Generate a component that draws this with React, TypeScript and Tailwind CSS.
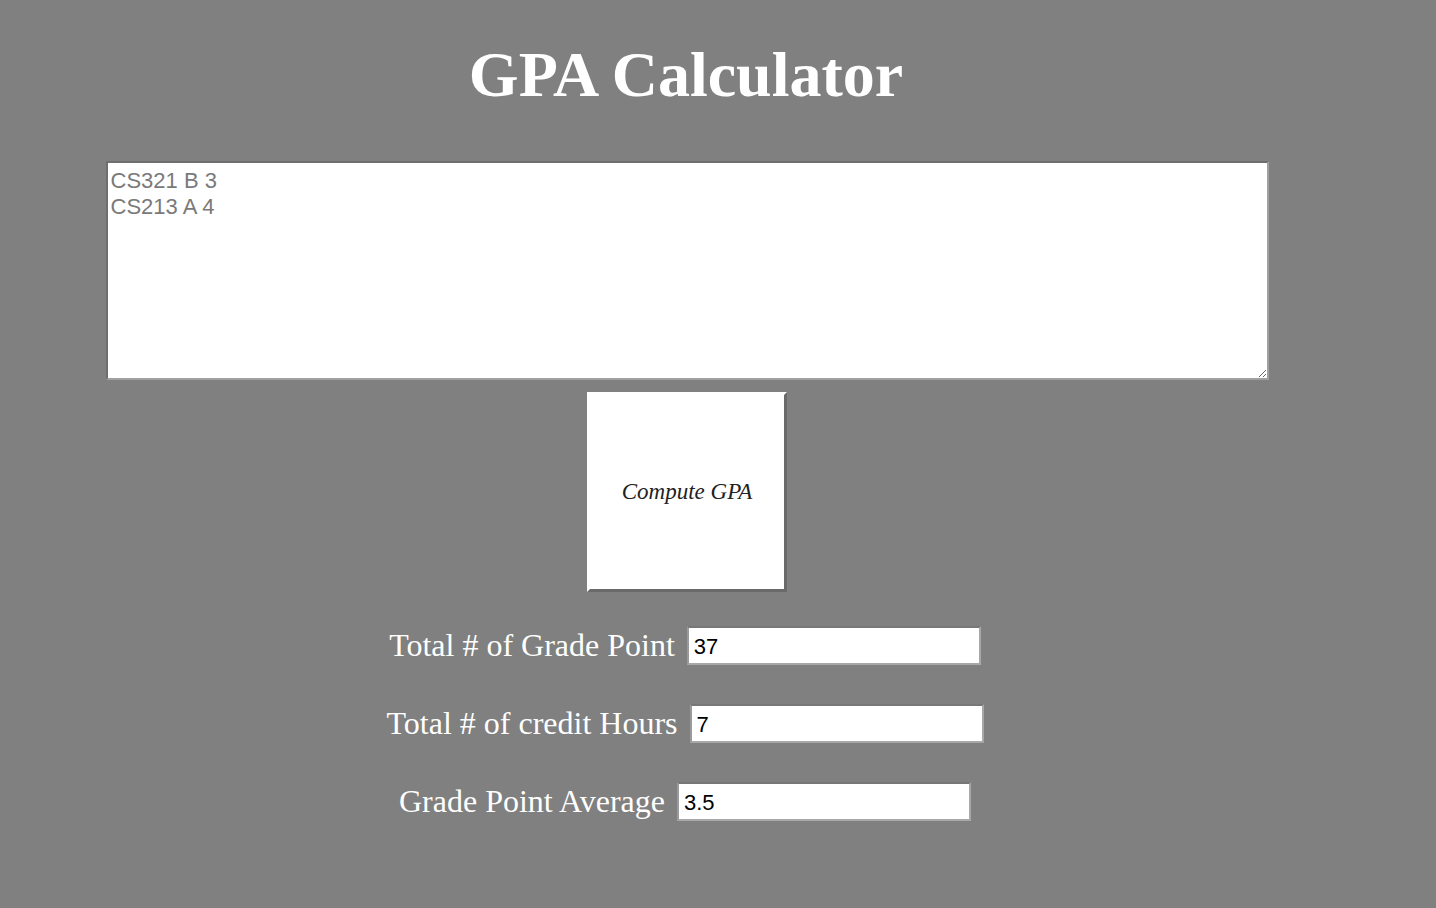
import { useState } from 'react';

interface ResultRowProps {
  label: string;
  value: string;
}

function ResultRow({ label, value }: ResultRowProps) {
  return (
    <div className="flex h-[39px] items-center justify-center gap-3">
      <label className="h-[39px] leading-[39px] text-[32px] text-white font-['Liberation_Serif',serif]">{label}</label>
      <input
        type="text"
        readOnly
        value={value}
        className="w-[294px] h-[39px] bg-white px-[5px] pt-[3px] text-[22px] text-black font-['Liberation_Sans',Arial,sans-serif] border-2 border-t-[#777777] border-l-[#9a9a9a] border-b-[#a8a8a8] border-r-[#a8a8a8] outline-none"
      />
    </div>
  );
}

export default function App() {
  const [result] = useState({ points: '37', hours: '7', gpa: '3.5' });

  return (
    <div className="min-h-[908px] w-full bg-[#808080]">
      <div className="w-[1372px] flex flex-col items-center">
        <h1 className="mt-[43px] text-[64px] leading-none font-bold text-white font-['Liberation_Serif',serif]">
          GPA Calculator
        </h1>

        <textarea
          placeholder={'CS321 B 3\nCS213 A 4'}
          className="mt-[54px] ml-[2px] w-[1163px] h-[219px] bg-white pt-[5px] px-[3px] text-[22px] leading-[26px] text-black placeholder:text-[#7a7a7a] font-['Liberation_Sans',Arial,sans-serif] border-2 border-t-[#6e6e6e] border-l-[#6e6e6e] border-b-[#a0a0a0] border-r-[#a0a0a0] outline-none resize"
        />

        <button className="mt-[12px] ml-[2px] w-[200px] h-[200px] bg-white border-[3px] border-t-white border-l-white border-b-[#6a6a6a] border-r-[#6a6a6a] text-[23px] italic text-[#222222] font-['Liberation_Serif',serif]">
          Compute GPA
        </button>

        <div className="mt-[34px] mr-[2px] flex flex-col gap-[39px]">
          <ResultRow label="Total # of Grade Point" value={result.points} />
          <ResultRow label="Total # of credit Hours" value={result.hours} />
          <ResultRow label="Grade Point Average" value={result.gpa} />
        </div>
      </div>
    </div>
  );
}
